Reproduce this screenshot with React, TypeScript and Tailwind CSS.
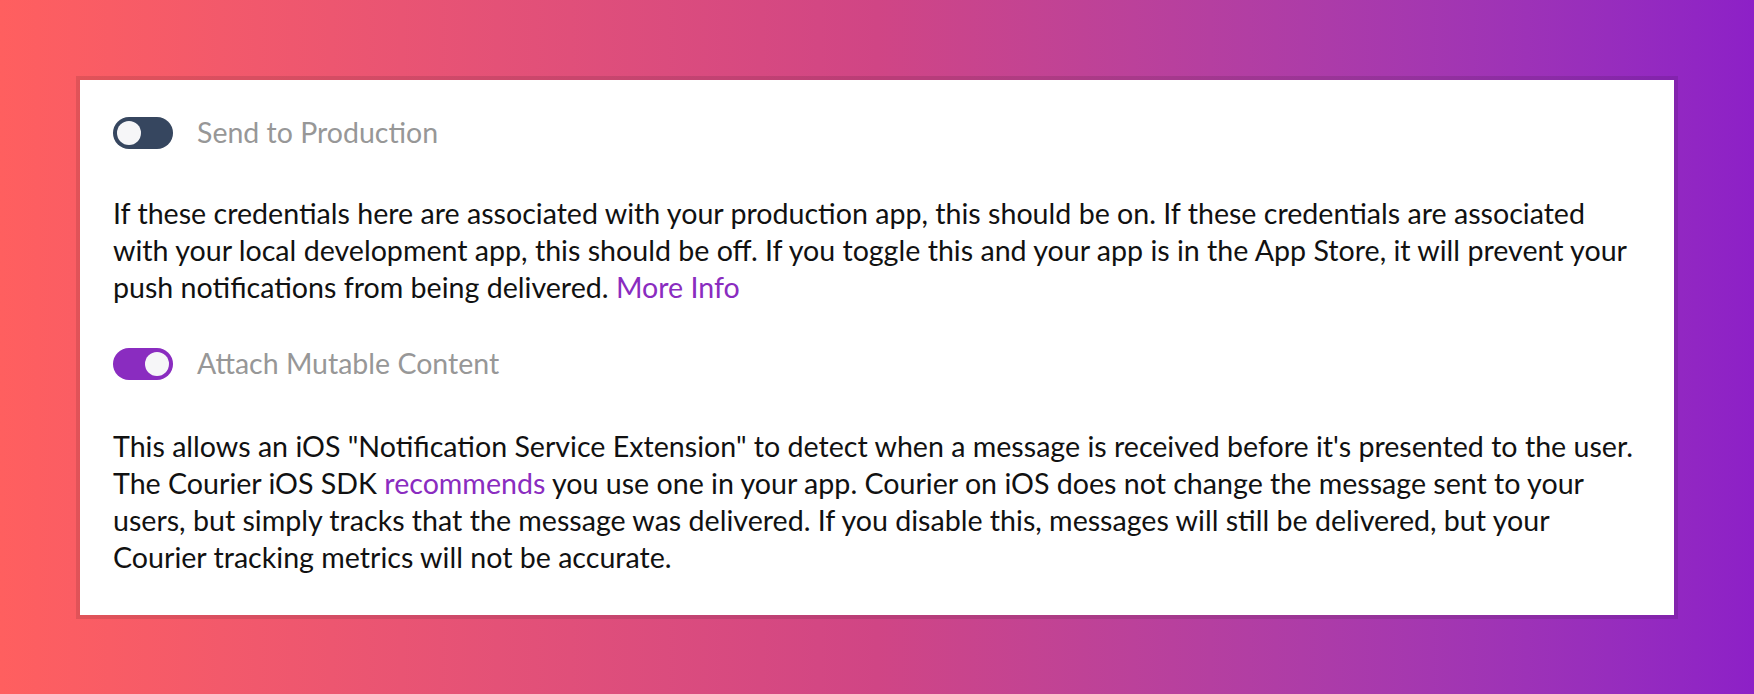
import React from "react";

function Toggle({ on }: { on: boolean }) {
  return (
    <div
      className={
        "flex h-[32px] w-[60px] shrink-0 items-center rounded-full px-[4px] " +
        (on ? "justify-end bg-[#8a2cc0]" : "justify-start bg-[#36465f]")
      }
    >
      <div className="h-[24px] w-[24px] rounded-full bg-[#f6f6f8]" />
    </div>
  );
}

export default function App() {
  return (
    <div
      className="flex h-[694px] w-full items-start bg-gradient-to-r from-[#ff5f5f] via-[#d04585] to-[#8d20c7] p-[76px]"
      style={{ fontFamily: "Lato, 'Noto Sans', sans-serif" }}
    >
      <div className="w-full border-4 border-black/10 bg-white bg-clip-padding px-[33px] pt-[34px] pb-[39px] text-[28.6px] leading-[37px] text-[#111]">
        <div className="flex items-center gap-[24px]">
          <Toggle on={false} />
          <span className="text-[28.5px] text-[#979797]">Send to Production</span>
        </div>
        <p className="mt-[44px] whitespace-nowrap">
          If these credentials here are associated with your production app, this should be on. If these credentials are associated
          <br />
          with your local development app, this should be off. If you toggle this and your app is in the App Store, it will prevent your
          <br />
          push notifications from being delivered. <span className="text-[#8a2cc0]">More Info</span>
        </p>
        <div className="mt-[39px] flex items-center gap-[24px]">
          <Toggle on={true} />
          <span className="text-[28.5px] text-[#979797]">Attach Mutable Content</span>
        </div>
        <p className="mt-[46px] whitespace-nowrap">
          This allows an iOS "Notification Service Extension" to detect when a message is received before it's presented to the user.
          <br />
          The Courier iOS SDK <span className="text-[#8a2cc0]">recommends</span> you use one in your app. Courier on iOS does not change the message sent to your
          <br />
          users, but simply tracks that the message was delivered. If you disable this, messages will still be delivered, but your
          <br />
          Courier tracking metrics will not be accurate.
        </p>
      </div>
    </div>
  );
}
